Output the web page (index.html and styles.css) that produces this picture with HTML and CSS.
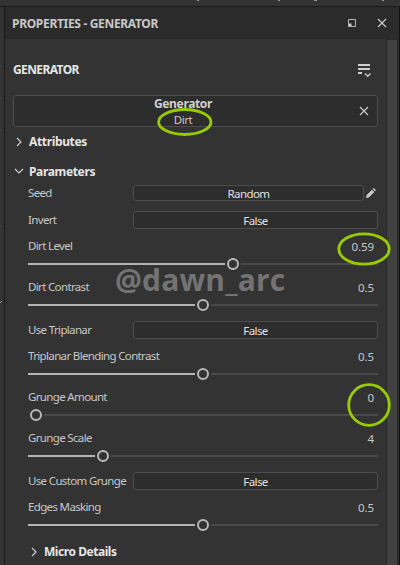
FILE: index.html
```
<!DOCTYPE html>
<html lang="en">
<head>
<meta charset="utf-8">
<title>Properties - Generator</title>
<link rel="stylesheet" href="styles.css">
</head>
<body>
<div class="app">
  <div class="topstrip"></div>
  <div class="main">
    <div class="leftstrip"></div>
    <section class="panel">
      <header class="titlebar">
        <h1 class="title">PROPERTIES - GENERATOR</h1>
        <svg class="i-dock" width="8" height="8" viewBox="0 0 8 8"><path d="M.5.5h7v7h-7z" fill="none" stroke="#b4b4b4"/><path d="M1 4.500h2.500V7H1z" fill="#d0d0d0"/></svg>
        <svg class="i-close" width="10" height="10" viewBox="0 0 10 10"><path d="M1 1l8 8M9 1L1 9" stroke="#c8c8c8" stroke-width="1.200"/></svg>
      </header>
      <div class="content">
        <div class="body">
          <div class="heading">
            <h2>GENERATOR</h2>
            <svg width="14" height="14" viewBox="0 0 14 14"><path d="M0 1h12M0 5h12M0 9h4" stroke="#d0d0d0" stroke-width="2"/><path d="M7 9.500l2.750 2.800 2.750-2.800" fill="none" stroke="#c8c8c8" stroke-width="1.500"/></svg>
          </div>
          <div class="resource">
            <div class="resource-text"><b>Generator</b><span>Dirt</span></div>
            <svg width="10" height="10" viewBox="0 0 10 10"><path d="M1 1l8 8M9 1L1 9" stroke="#c8c8c8" stroke-width="1.200"/></svg>
          </div>
          <div class="group g-attr"><svg width="10" height="10" viewBox="0 0 10 10"><path d="M3 1l4 4-4 4" fill="none" stroke="#ccc" stroke-width="1.200"/></svg><h3>Attributes</h3></div>
          <div class="group g-param"><svg width="10" height="10" viewBox="0 0 10 10"><path d="M1 3l4 4 4-4" fill="none" stroke="#ccc" stroke-width="1.200"/></svg><h3>Parameters</h3></div>
          <div class="row seed"><label>Seed</label><button class="field">Random</button>
            <svg class="pencil" width="10" height="10" viewBox="0 0 10 10"><path d="M0 10l.5-2.800L6 1.700 8.300 4 2.800 9.500zM6.700 1L7.700 0 10 2.300 9 3.300z" fill="#ccc"/></svg></div>
          <div class="row"><label>Invert</label><button class="field">False</button></div>
          <div class="slider"><div class="line"><label>Dirt Level</label><output>0.59</output></div><div class="track"><i class="fill" style="width:197px"></i><i class="knob"></i><i class="rest"></i></div></div>
          <div class="slider"><div class="line"><label>Dirt Contrast</label><output>0.5</output></div><div class="track"><i class="fill" style="width:167px"></i><i class="knob"></i><i class="rest"></i></div></div>
          <div class="row"><label>Use Triplanar</label><button class="field">False</button></div>
          <div class="slider"><div class="line"><label>Triplanar Blending Contrast</label><output>0.5</output></div><div class="track"><i class="fill" style="width:167px"></i><i class="knob"></i><i class="rest"></i></div></div>
          <div class="slider"><div class="line"><label>Grunge Amount</label><output>0</output></div><div class="track"><i class="fill" style="width:0px"></i><i class="knob"></i><i class="rest"></i></div></div>
          <div class="slider"><div class="line"><label>Grunge Scale</label><output>4</output></div><div class="track"><i class="fill" style="width:67px"></i><i class="knob"></i><i class="rest"></i></div></div>
          <div class="row"><label>Use Custom Grunge</label><button class="field">False</button></div>
          <div class="slider"><div class="line"><label>Edges Masking</label><output>0.5</output></div><div class="track"><i class="fill" style="width:167px"></i><i class="knob"></i><i class="rest"></i></div></div>
          <div class="group g-micro"><svg width="10" height="10" viewBox="0 0 10 10"><path d="M3 1l4 4-4 4" fill="none" stroke="#ccc" stroke-width="1.200"/></svg><h3>Micro Details</h3></div>
        </div>
        <div class="scrollbar"></div>
      </div>
    </section>
    <div class="rightstrip"></div>
  </div>
  <div class="watermark">@dawn_arc</div>
  <svg class="marks" width="400" height="565" viewBox="0 0 400 565">
    <g fill="none" stroke="#9c0" stroke-width="2.800">
      <ellipse cx="184.800" cy="122" rx="26.200" ry="12.500"/>
      <ellipse cx="364" cy="249" rx="25.200" ry="15.200"/>
      <ellipse cx="369" cy="405" rx="20.300" ry="20.300"/>
    </g>
    <path d="M197 0h2v1h-2zM278 0h2v1h-2zM314 0h3v1h-3zM382 0h2v1h-2z" fill="#8a9a98"/>
    <path d="M0 67l2-2M0 99l2-2M0 131l2-2M0 227l2-2" stroke="#4a4a4a"/>
    <path d="M0 303l2-2" stroke="#999"/>
  </svg>
</div>
</body>
</html>
```
FILE: styles.css
```
* { box-sizing: border-box; margin: 0; padding: 0; }
body { background: #333; color: #c8c8c8; font: 12px/16px "Noto Sans", "Open Sans", sans-serif; overflow: hidden; }
svg { display: block; flex: none; }
.app { position: relative; width: 400px; height: 565px; overflow: hidden; display: flex; flex-direction: column; }
.topstrip { height: 7px; flex: none; background: #333; border-bottom: 1px solid #1a1a1a; }
.main { flex: 1; display: flex; min-height: 0; }
.leftstrip { width: 5px; border-right: 1px solid #1a1a1a; }
.rightstrip { width: 2px; background: #2d2d2d; border-right: 1px solid #111; }
.panel { flex: 1; display: flex; flex-direction: column; min-width: 0; }
.titlebar { height: 32px; flex: none; background: #2b2b2b; display: flex; align-items: center; padding: 0 11px 1px 7px; }
.title { flex: 1; font-size: 12px; line-height: 16px; color: #c8c8c8; padding-top: 2px; letter-spacing: -.32px; }
.i-dock { margin-right: 21px; }
.content { flex: 1; display: flex; min-height: 0; }
.body { flex: 1; padding: 0 8px 0 8px; min-width: 0; white-space: nowrap; }
.scrollbar { width: 12px; background: #414141; border: solid #282828; border-width: 1px 1px 0; }
.heading { height: 56px; display: flex; align-items: center; justify-content: space-between; padding: 6px 6px 0 0; }
.heading svg { margin-top: 1px; }
h2, h3 { font-size: 12px; line-height: 16px; color: #e6e6e6; letter-spacing: -.35px; }
h2 { letter-spacing: -.6px; }
.resource { width: 365px; height: 32px; border: 1px solid #4d4d4d; border-radius: 3px; background: #2d2d2d; display: flex; align-items: center; padding-right: 8px; }
.resource-text { flex: 1; display: flex; flex-direction: column; align-items: center; padding: 2px 7px 1px 0; line-height: 16px; letter-spacing: -.35px; }
.resource-text span { font-size: 11.5px; letter-spacing: -.4px; }
.resource b { color: #d0d0d0; }
.group { display: flex; align-items: center; gap: 5px; }
.g-attr { height: 30px; }
.g-param { height: 23px; padding-top: 6px; }
.g-attr svg, .g-param svg { margin-left: 1px; }
.g-param svg { margin-top: -2px; }
.g-micro { height: 27px; padding-left: 16px; }
.g-micro h3 { letter-spacing: -.45px; }
.row { height: 28px; display: flex; align-items: center; padding-left: 15px; }
label { width: 105px; flex: none; font-size: 11.5px; letter-spacing: -.65px; }
.row label { padding-bottom: 4px; }
.seed label { padding-bottom: 3px; }
.field { width: 245px; height: 18px; flex: none; margin-bottom: 4px; padding-top: 1px; border: 1px solid #4d4d4d; border-radius: 3px; background: #2d2d2d; color: #e0e0e0; font: inherit; font-size: 11.5px; line-height: 16px; text-align: center; letter-spacing: -.6px; }
.seed .field { width: 231px; height: 16px; margin-bottom: 2px; line-height: 14px; }
.pencil { margin: 0 0 2px 2px; }
.slider { height: 41px; padding: 2px 0 0 15px; width: 365px; }
.line { display: flex; justify-content: space-between; height: 20px; }
output { padding: 1px 4px 0 0; font-size: 11.5px; letter-spacing: -.1px; }
.track { display: flex; align-items: center; height: 12px; }
.fill { height: 2px; background: #b4b4b4; }
.rest { height: 2px; background: #4a4a4a; flex: 1; }
.knob { width: 12px; height: 12px; margin: 0 2px; border: 2px solid #b8b8b8; border-radius: 50%; }
.watermark { position: absolute; left: 115px; top: 260px; font-family: "Open Sans", sans-serif; font-size: 30px; line-height: 40px; font-weight: 700; letter-spacing: .15px; color: rgba(128,128,128,.85); }
.marks { position: absolute; left: 0; top: 0; }
```
